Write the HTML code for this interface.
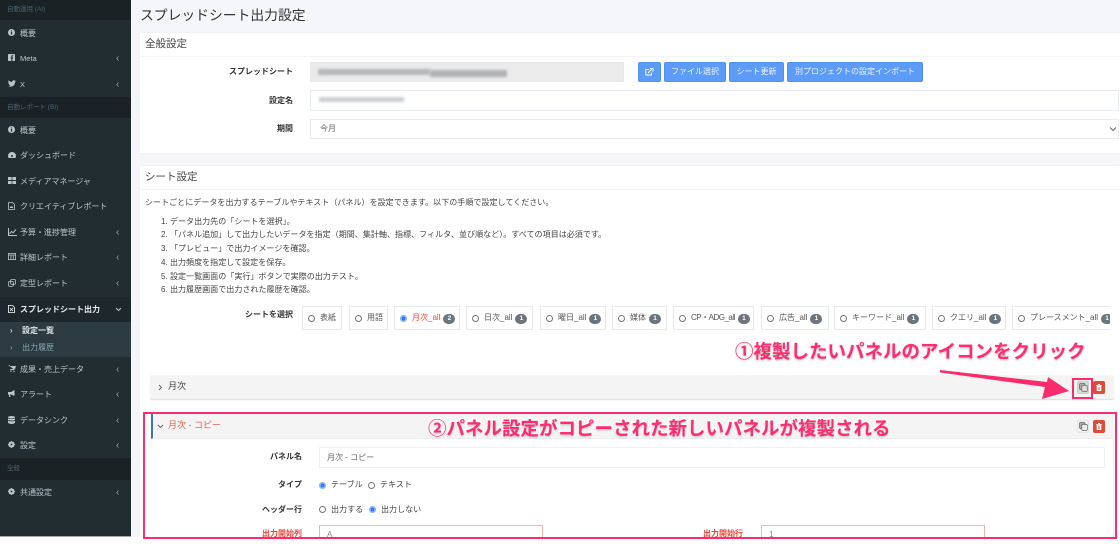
<!DOCTYPE html>
<html lang="ja"><head><meta charset="utf-8"><title>スプレッドシート出力設定</title>
<style>
html,body{margin:0;padding:0;width:1120px;height:555px;overflow:hidden;background:#fff}
body{font-family:"Liberation Sans","Noto Sans CJK JP",sans-serif;font-size:8px;color:#444;position:relative;filter:blur(.3px)}
.a{position:absolute;white-space:nowrap}
#side{left:0;top:0;width:131px;height:537px;background:#222d32;border-bottom:1px solid #aaa;box-sizing:border-box}
#main{left:131px;top:0;width:989px;height:537px;background:#f4f6f9;overflow:hidden}
.h{position:absolute;left:0;width:131px;background:#1a2226;color:#4b646f;font-size:6.5px;padding-left:7px;box-sizing:border-box}
.i{position:absolute;left:0;width:131px;height:25px;line-height:25px;color:#b8c7ce;font-size:8px}
.i span{position:absolute;left:20px}
.i svg{position:absolute;left:8px;top:8px}
.i b{position:absolute;left:116px;top:0;font-weight:400;color:#8aa4af;font-size:10px}
.card{position:absolute;left:140px;width:980px;background:#fff;box-shadow:0 0 1px rgba(0,0,0,.08)}
.ct{position:absolute;left:5px;top:0;font-size:10.5px;color:#444;line-height:22px}
.ln{position:absolute;left:0;right:0;height:1px;background:#f4f4f4}
.lb{position:absolute;text-align:right;font-weight:700;color:#333;font-size:8px;line-height:12px}
.in{position:absolute;background:#fff;border:1px solid #e8ebf0;box-sizing:border-box;color:#666;font-size:8px}
.btn{position:absolute;top:62px;height:20px;background:#5c9bf7;border:1px solid #4f90f0;border-radius:2px;box-sizing:border-box;color:#f2f6fe;font-size:8px;line-height:18px;text-align:center}
.t{position:absolute;left:145px;font-size:8.05px;color:#444;line-height:12px;white-space:nowrap}
.o{position:absolute;top:306px;height:24px;background:#fff;border:1px solid #e6e8ec;box-sizing:border-box;font-size:8px;line-height:22px;color:#555;white-space:nowrap;padding-left:17px}
.o i{position:absolute;left:5px;top:8px;width:7px;height:7px;border:1px solid #777;border-radius:50%;box-sizing:border-box;background:#fff}
.o.on i,.r.on{border:1px solid #7fb0f7!important;background:radial-gradient(circle,#2f7cf0 0 2px,#dbe9fd 2.4px)!important}
.o u{display:inline-block;text-decoration:none;background:#6c757d;color:#fff;font-size:6.5px;font-weight:700;width:12px;height:10px;line-height:10px;border-radius:5px;text-align:center;margin-left:3px;vertical-align:0}
.r{position:absolute;width:7px;height:7px;border:1px solid #777;border-radius:50%;box-sizing:border-box;background:#fff}
.blur{position:absolute;filter:blur(1.4px)}
.ann{position:absolute;white-space:nowrap;font-size:18.5px;font-weight:700;color:#ff2d6f;-webkit-text-stroke:3px #fff;paint-order:stroke fill;text-shadow:0 1px 2px rgba(0,0,0,.3);line-height:24px}
.ib{position:absolute;width:12px;height:13px;border-radius:2px;box-sizing:border-box}
</style></head><body>
<div class="a" id="side">
<div class="h" style="top:0;height:20px;line-height:20px">自動運用 (AI)</div>
<div class="i" style="top:21px"><svg width="7" height="7" viewBox="0 0 8 8"><circle cx="4" cy="4" r="4" fill="#b8c7ce"/><rect x="3.3" y="3.4" width="1.4" height="3" fill="#222d32"/><rect x="3.3" y="1.6" width="1.4" height="1.2" fill="#222d32"/></svg><span>概要</span></div>
<div class="i" style="top:46px"><svg width="7" height="7" viewBox="0 0 8 8"><rect width="8" height="8" rx="1" fill="#b8c7ce"/><path d="M5 8V5h1V3.8H5V3c0-.4.2-.6.6-.6H6V1.3H5.2C4.2 1.3 3.8 2 3.8 2.8v1H3V5h.8v3z" fill="#222d32"/></svg><span style="font-size:7.5px">Meta</span><b>‹</b></div>
<div class="i" style="top:72px"><svg width="8" height="7" viewBox="0 0 8 7"><path d="M0 6c3 1.500 7 .3 7-4l1-1-1 .2.7-1-1 .5C5.700-.2 4 .5 4.200 2 2.800 2 1.400 1.300.5.300 0 1.300.4 2.300 1 2.800L.3 2.600c0 .8.6 1.500 1.400 1.700l-.7 0c.2.700.9 1.100 1.500 1.100C2 5.900 1 6.200 0 6z" fill="#b8c7ce"/></svg><span style="font-size:7.500px">X</span><b>‹</b></div>
<div class="h" style="top:97px;height:21px;line-height:21px">自動レポート (BI)</div>
<div class="i" style="top:118px"><svg width="7" height="7" viewBox="0 0 8 8"><circle cx="4" cy="4" r="4" fill="#b8c7ce"/><rect x="3.3" y="3.4" width="1.4" height="3" fill="#222d32"/><rect x="3.3" y="1.6" width="1.4" height="1.2" fill="#222d32"/></svg><span>概要</span></div>
<div class="i" style="top:143px"><svg width="8" height="7" viewBox="0 0 8 7"><path d="M0 5a4 4 0 0 1 8 0c0 .8-.3 1.500-.6 2H.6C.3 6.500 0 5.800 0 5z" fill="#b8c7ce"/><circle cx="4" cy="5" r="1" fill="#222d32"/></svg><span>ダッシュボード</span></div>
<div class="i" style="top:169px"><svg width="8" height="7" viewBox="0 0 8 7"><path d="M0 0h3.600v3H0zM4.400 0H8v3H4.400zM0 4h3.600v3H0zM4.400 4H8v3H4.400z" fill="#b8c7ce"/></svg><span>メディアマネージャ</span></div>
<div class="i" style="top:194px"><svg width="7" height="8" viewBox="0 0 7 8"><path d="M.5.500h4l2 2v5h-6z" fill="none" stroke="#b8c7ce" stroke-width=".8"/><path d="M1.500 6l1.500-2 1 1 1-1v2z" fill="#b8c7ce"/></svg><span>クリエイティブレポート</span></div>
<div class="i" style="top:220px"><svg width="9" height="8" viewBox="0 0 9 8"><path d="M.5 0v7.500H9" fill="none" stroke="#b8c7ce"/><path d="M1.500 6L3.500 3.500 5 4.800 8 1.500" fill="none" stroke="#b8c7ce"/></svg><span>予算・進捗管理</span><b>‹</b></div>
<div class="i" style="top:245px"><svg width="8" height="7" viewBox="0 0 8 7"><path d="M.4.400h7.200v6.200H.4zM.4 2h7.200M3 2v4.600M5.300 2v4.600" fill="none" stroke="#b8c7ce" stroke-width=".8"/></svg><span>詳細レポート</span><b>‹</b></div>
<div class="i" style="top:271px"><svg width="8" height="8" viewBox="0 0 8 8"><rect x=".4" y="2.400" width="5" height="5" rx="1.500" fill="none" stroke="#b8c7ce" stroke-width=".8"/><rect x="2.600" y=".4" width="5" height="5" rx="1.500" fill="none" stroke="#b8c7ce" stroke-width=".8"/></svg><span>定型レポート</span><b>‹</b></div>
<div class="i" style="top:297px;background:#1e282c;color:#fff;height:25px"><svg width="7" height="8" viewBox="0 0 7 8"><path d="M.5.500h4l2 2v5h-6z" fill="none" stroke="#fff" stroke-width=".8"/><path d="M2 3l3 3M5 3L2 6" stroke="#fff" stroke-width=".7"/></svg><span style="font-weight:700;color:#e8eef0">スプレッドシート出力</span><svg style="left:115px;top:10px" width="7" height="5" viewBox="0 0 7 5"><path d="M1 1l2.500 2.500L6 1" fill="none" stroke="#b8c7ce"/></svg></div>
<div style="position:absolute;left:0;top:322px;width:131px;height:35px;background:#2c3b41"></div>
<div class="a" style="left:10px;top:325px;color:#fff;font-size:8px;line-height:11px">›</div><div class="a" style="left:22px;top:325px;color:#e3e9ec;font-size:8px;font-weight:700;line-height:11px">設定一覧</div>
<div class="a" style="left:10px;top:342px;color:#8aa4af;font-size:8px;line-height:11px">›</div><div class="a" style="left:22px;top:342px;color:#8aa4af;font-size:8px;line-height:11px">出力履歴</div>
<div class="i" style="top:357px"><svg width="8" height="7" viewBox="0 0 8 7"><path d="M0 0h1.500l.5 1h6L7 4H2.500L2 5h5" fill="#b8c7ce"/><circle cx="3" cy="6.200" r=".7" fill="#b8c7ce"/><circle cx="6" cy="6.200" r=".7" fill="#b8c7ce"/></svg><span>成果・売上データ</span><b>‹</b></div>
<div class="i" style="top:382px"><svg width="8" height="7" viewBox="0 0 8 7"><path d="M0 2h3L6.500 0v6L3 4.500H2L2.500 7H1.200L.8 4.500H0z" fill="#b8c7ce"/></svg><span>アラート</span><b>‹</b></div>
<div class="i" style="top:408px"><svg width="7" height="8" viewBox="0 0 7 8"><ellipse cx="3.500" cy="1.200" rx="3.500" ry="1.200" fill="#b8c7ce"/><path d="M0 2.200c1 .8 6 .8 7 0V4c-1 .8-6 .8-7 0zM0 4.800c1 .8 6 .8 7 0v2c-1 1.600-6 1.600-7 0z" fill="#b8c7ce"/></svg><span>データシンク</span><b>‹</b></div>
<div class="i" style="top:433px"><svg width="7" height="7" viewBox="0 0 8 8"><circle cx="4" cy="4" r="2.600" fill="none" stroke="#b8c7ce" stroke-width="1.800"/><path d="M4 0v8M0 4h8M1.200 1.200l5.600 5.600M6.800 1.200L1.200 6.800" stroke="#b8c7ce" stroke-width="1.100"/><circle cx="4" cy="4" r="1" fill="#222d32"/></svg><span>設定</span><b>‹</b></div>
<div class="h" style="top:458px;height:22px;line-height:22px">全般</div>
<div class="i" style="top:480px"><svg width="7" height="7" viewBox="0 0 8 8"><circle cx="4" cy="4" r="2.600" fill="none" stroke="#b8c7ce" stroke-width="1.800"/><path d="M4 0v8M0 4h8M1.200 1.200l5.600 5.600M6.800 1.200L1.200 6.800" stroke="#b8c7ce" stroke-width="1.100"/><circle cx="4" cy="4" r="1" fill="#222d32"/></svg><span>共通設定</span><b>‹</b></div>
</div>
<div class="a" id="main"></div>
<div class="a" style="left:140px;top:6px;font-size:13.800px;line-height:20px;color:#333">スプレッドシート出力設定</div>

<div class="card" style="top:33px;height:120px"><div class="ct">全般設定</div><div class="ln" style="top:23px"></div></div>
<div class="lb" style="right:827px;top:66px">スプレッドシート</div>
<div class="in" style="left:310px;top:62px;width:314px;height:20px;background:#ebebeb;border-color:#e6e8ec"></div>
<div class="blur" style="left:318px;top:69px;width:112px;height:6px;background:#b4b6b9"></div>
<div class="blur" style="left:430px;top:70px;width:77px;height:7px;background:#b0b2b5"></div>
<div class="btn" style="left:638px;width:23px"><svg width="9" height="8" viewBox="0 0 9 8" style="margin-top:5px;display:block;margin-left:6px"><path d="M6.500 4.500V7H.8V1.500h3" fill="none" stroke="#fff" stroke-width=".9"/><path d="M3 5l4-4M5 .6h3v3" fill="none" stroke="#fff" stroke-width=".9"/></svg></div>
<div class="btn" style="left:664px;width:62px">ファイル選択</div>
<div class="btn" style="left:729px;width:55px">シート更新</div>
<div class="btn" style="left:787px;width:136px">別プロジェクトの設定インポート</div>
<div class="lb" style="right:827px;top:95px">設定名</div>
<div class="in" style="left:310px;top:90px;width:809px;height:21px"></div>
<div class="blur" style="left:319px;top:97px;width:85px;height:5px;background:#ccced1"></div>
<div class="lb" style="right:827px;top:123px">期間</div>
<div class="in" style="left:310px;top:119px;width:809px;height:20px;line-height:18px;padding-left:9px">今月</div>
<svg class="a" style="left:1109px;top:126px" width="8" height="6" viewBox="0 0 8 6"><path d="M1 1.500l3 3 3-3" fill="none" stroke="#666" stroke-width="1"/></svg>

<div class="card" style="top:166px;height:371px"><div class="ct">シート設定</div><div class="ln" style="top:23px"></div></div>
<div class="t" style="top:197px">シートごとにデータを出力するテーブルやテキスト（パネル）を設定できます。以下の手順で設定してください。</div>
<div class="t" style="left:161px;top:216px">1. データ出力先の「シートを選択」。</div>
<div class="t" style="left:161px;top:229px">2. 「パネル追加」して出力したいデータを指定（期間、集計軸、指標、フィルタ、並び順など）。すべての項目は必須です。</div>
<div class="t" style="left:161px;top:243px">3. 「プレビュー」で出力イメージを確認。</div>
<div class="t" style="left:161px;top:257px">4. 出力頻度を指定して設定を保存。</div>
<div class="t" style="left:161px;top:271px">5. 設定一覧画面の「実行」ボタンで実際の出力テスト。</div>
<div class="t" style="left:161px;top:284px">6. 出力履歴画面で出力された履歴を確認。</div>
<div class="lb" style="right:827px;top:309px">シートを選択</div>
<div class="a" style="left:302px;top:300px;width:808px;height:36px;overflow:hidden">
<div class="o" style="left:0;top:6px;width:40px"><i></i>表紙</div>
<div class="o" style="left:47px;top:6px;width:39px"><i></i>用語</div>
<div class="o on" style="left:92px;top:6px;width:66px;color:#e8483b"><i></i>月次_all<u>2</u></div>
<div class="o" style="left:164px;top:6px;width:67px"><i></i>日次_all<u>1</u></div>
<div class="o" style="left:238px;top:6px;width:66px"><i></i>曜日_all<u>1</u></div>
<div class="o" style="left:310px;top:6px;width:55px"><i></i>媒体<u>1</u></div>
<div class="o" style="left:371px;top:6px;width:81px"><i></i><span style="letter-spacing:-.5px">CP・ADG_all</span><u>1</u></div>
<div class="o" style="left:459px;top:6px;width:68px"><i></i>広告_all<u>1</u></div>
<div class="o" style="left:532px;top:6px;width:92px"><i></i>キーワード_all<u>1</u></div>
<div class="o" style="left:630px;top:6px;width:74px"><i></i>クエリ_all<u>1</u></div>
<div class="o" style="left:710px;top:6px;width:110px"><i></i>プレースメント_all<u>1</u></div>
</div>

<div class="a" style="left:150px;top:375px;width:964px;height:24px;background:#f4f4f4;border-radius:2px;box-shadow:0 1px 1px rgba(0,0,0,.14)"></div>
<svg class="a" style="left:158px;top:384px" width="5" height="7" viewBox="0 0 5 7"><path d="M1 1l2.500 2.500L1 6" fill="none" stroke="#666"/></svg>
<div class="a" style="left:168px;top:380px;font-size:9px;line-height:13px;color:#444">月次</div>
<div class="ib" style="left:1077px;top:381px;background:#d8d8d8;border:1px solid #ccc"></div>
<svg class="a" style="left:1079px;top:383px" width="9" height="9" viewBox="0 0 9 9"><rect x=".5" y=".5" width="5.500" height="6" rx="1" fill="#aaa" stroke="#666" stroke-width=".7"/><rect x="2.800" y="2.400" width="5.500" height="6" rx="1" fill="#ddd" stroke="#666" stroke-width=".7"/></svg>
<div class="ib" style="left:1093px;top:381px;background:#dd4b39"></div>
<svg class="a" style="left:1096px;top:384px" width="6" height="7" viewBox="0 0 6 7"><path d="M0 1h6v.8H0zM2 0h2v1H2zM.7 2h4.600v5H.7z" fill="#fff"/><rect x="2" y="3" width="2" height="3" fill="#dd4b39" opacity=".5"/></svg>

<div class="a" style="left:151px;top:414px;width:963px;height:123px;background:#fff;border-right:1px solid #eee;box-sizing:border-box"></div>
<div class="a" style="left:151px;top:414px;width:963px;height:25px;background:#f4f4f4;border-left:2px solid #3c78b0;border-bottom:1px solid #eee;box-sizing:border-box"></div>
<svg class="a" style="left:157px;top:424px" width="7" height="5" viewBox="0 0 7 5"><path d="M1 1l2.500 2.500L6 1" fill="none" stroke="#666"/></svg>
<div class="a" style="left:168px;top:419px;font-size:9px;line-height:13px;color:#e2604f">月次 - コピー</div>
<div class="ib" style="left:1077px;top:420px;background:#f4f4f4;border:1px solid #e6e6e6"></div>
<svg class="a" style="left:1079px;top:422px" width="9" height="9" viewBox="0 0 9 9"><rect x=".5" y=".5" width="5.500" height="6" rx="1" fill="#aaa" stroke="#666" stroke-width=".7"/><rect x="2.800" y="2.400" width="5.500" height="6" rx="1" fill="#eee" stroke="#666" stroke-width=".7"/></svg>
<div class="ib" style="left:1093px;top:420px;background:#dd4b39"></div>
<svg class="a" style="left:1096px;top:423px" width="6" height="7" viewBox="0 0 6 7"><path d="M0 1h6v.8H0zM2 0h2v1H2zM.7 2h4.600v5H.7z" fill="#fff"/><rect x="2" y="3" width="2" height="3" fill="#dd4b39" opacity=".5"/></svg>

<div class="lb" style="right:818px;top:451px">パネル名</div>
<div class="in" style="left:319px;top:447px;width:786px;height:21px;line-height:19px;padding-left:7px;border-color:#eceff4">月次 - コピー</div>
<div class="lb" style="right:818px;top:479px">タイプ</div>
<i class="r on" style="left:319px;top:482px"></i><div class="t" style="left:331px;top:479px">テーブル</div>
<i class="r" style="left:368px;top:482px"></i><div class="t" style="left:380px;top:479px">テキスト</div>
<div class="lb" style="right:818px;top:504px">ヘッダー行</div>
<i class="r" style="left:319px;top:506px"></i><div class="t" style="left:331px;top:504px">出力する</div>
<i class="r on" style="left:369px;top:506px"></i><div class="t" style="left:381px;top:504px">出力しない</div>
<div class="lb" style="right:818px;top:528px;color:#e8483b">出力開始列</div>
<div class="a" style="left:319px;top:525px;width:224px;height:13px;border:1px solid #f3b3ab;border-bottom:0;box-sizing:border-box;background:#fff;color:#888;font-size:8px;line-height:18px;padding-left:7px">A</div>
<div class="lb" style="left:703px;top:528px;color:#e8483b">出力開始行</div>
<div class="a" style="left:761px;top:525px;width:224px;height:13px;border:1px solid #f3b3ab;border-bottom:0;box-sizing:border-box;background:#fff;color:#888;font-size:8px;line-height:18px;padding-left:7px">1</div>

<div class="a" style="left:0;top:537px;width:1120px;height:18px;background:#fff"></div>
<div class="a" style="left:143px;top:412px;width:974px;height:127px;border:2px solid #fb2c6c;box-sizing:border-box"></div>
<div class="a" style="left:1072px;top:378px;width:21px;height:21px;border:2px solid #fb2c6c;box-sizing:border-box"></div>
<svg class="a" style="left:935px;top:365px" width="140" height="40" viewBox="0 0 140 40"><path d="M5 5L5 7.500 110 22 107 34 134 26 113 12 112 17z" fill="#fb2c6c"/></svg>
<div class="ann" style="left:735px;top:340px">①複製したいパネルのアイコンをクリック</div>
<div class="ann" style="left:428px;top:417px">②パネル設定がコピーされた新しいパネルが複製される</div>
</body></html>
